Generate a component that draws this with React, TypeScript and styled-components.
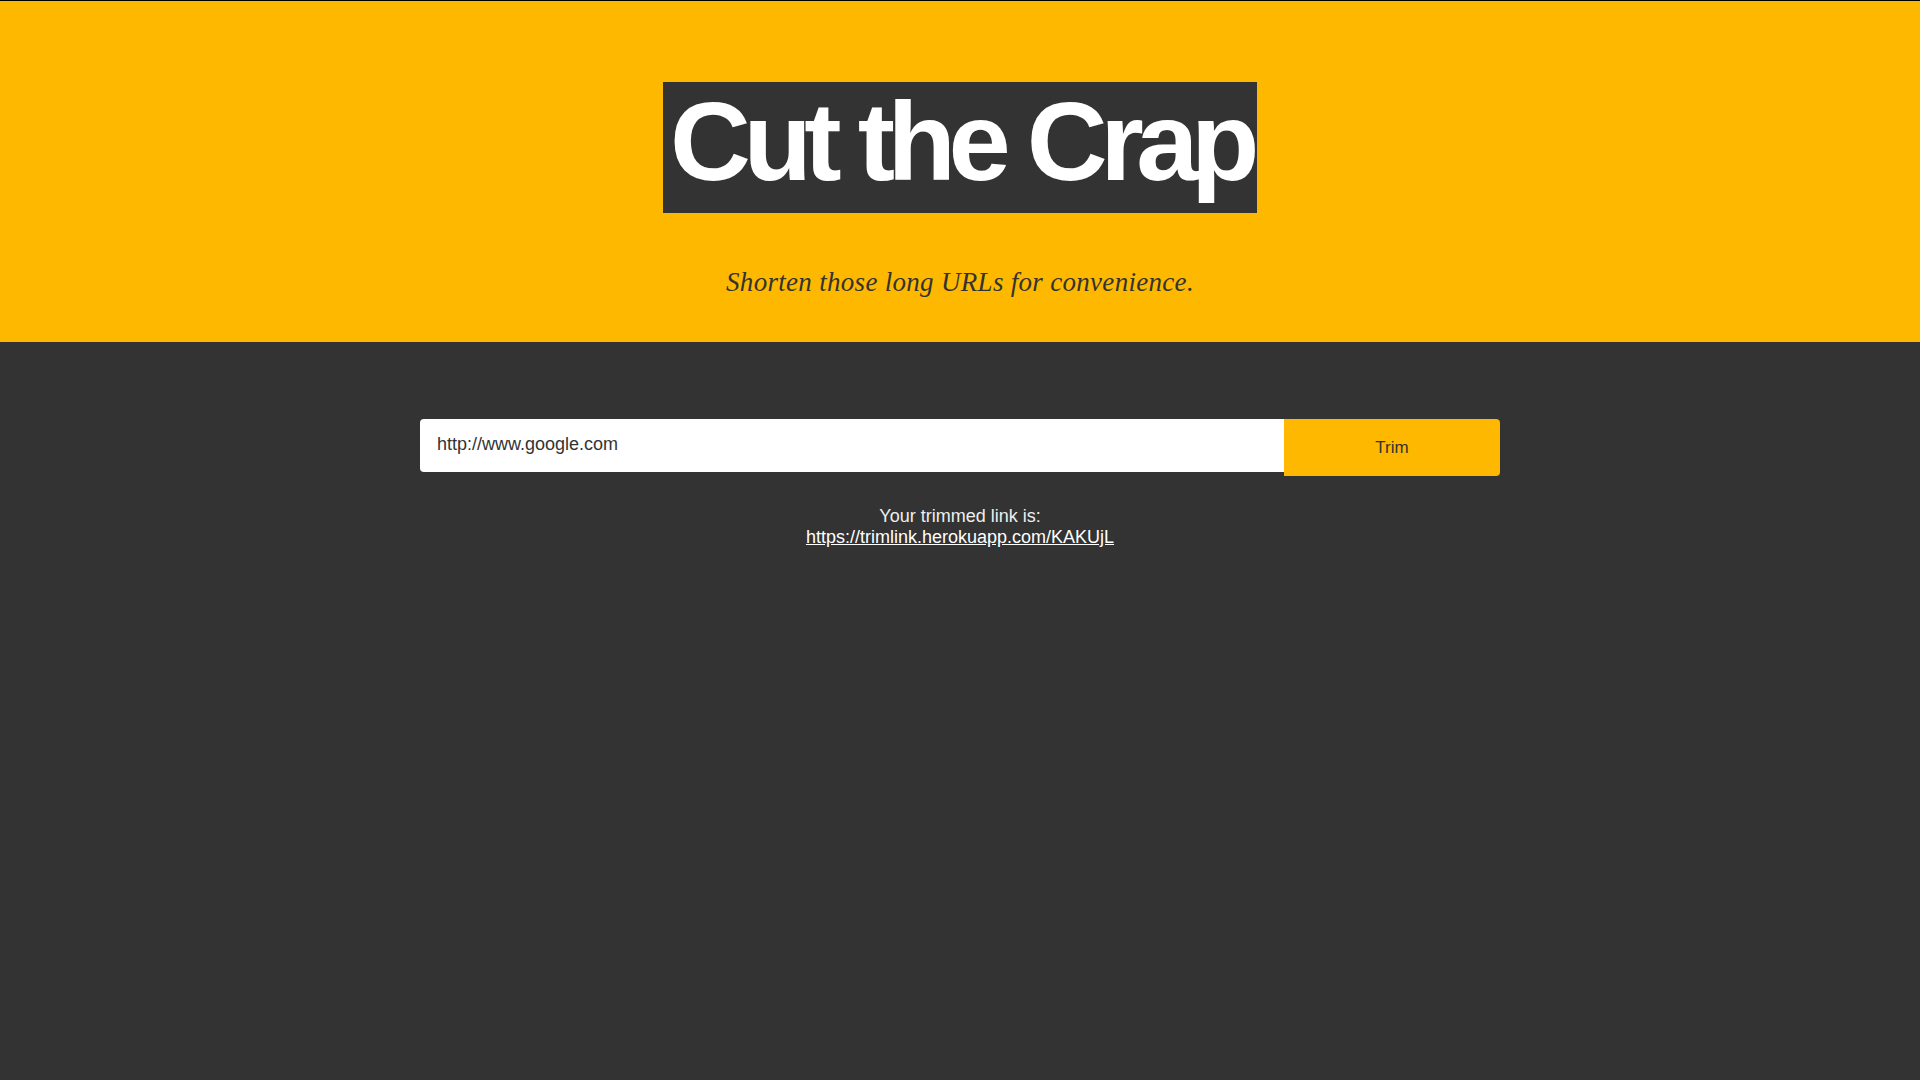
import React from "react";
import styled, { createGlobalStyle } from "styled-components";

const GlobalStyle = createGlobalStyle`
  html, body {
    margin: 0;
    padding: 0;
    background: #333333;
    min-height: 100%;
  }
  body {
    font-family: "Liberation Sans", Arial, Helvetica, sans-serif;
  }
`;

const Page = styled.div`
  min-height: 100vh;
  background: #333333;
  display: flex;
  flex-direction: column;
`;

const Header = styled.header`
  background: #ffb800;
  border-top: 1px solid #000;
  padding: 81px 0 45px;
  display: flex;
  flex-direction: column;
  align-items: center;
`;

const Title = styled.h1`
  margin: 0;
  display: inline-block;
  background: #333333;
  color: #ffffff;
  font-family: "Liberation Sans", Helvetica, Arial, sans-serif;
  font-weight: 700;
  font-size: 112px;
  line-height: 112px;
  letter-spacing: -7.5px;
  padding: 4px 5px 15px 7px;
`;

const Subtitle = styled.p`
  margin: 54px 0 0;
  font-family: "Liberation Serif", "Times New Roman", serif;
  font-style: italic;
  font-size: 27px;
  line-height: 30px;
  letter-spacing: 0.3px;
  color: #333333;
`;

const Main = styled.main`
  display: flex;
  flex-direction: column;
  align-items: center;
  padding-top: 77px;
`;

const Form = styled.form`
  width: 1080px;
  display: flex;
  align-items: flex-start;
`;

const UrlInput = styled.input`
  box-sizing: border-box;
  width: 80%;
  height: 53px;
  border: none;
  outline: none;
  border-radius: 4px 0 0 4px;
  background: #ffffff;
  padding: 0 17px 2px;
  font-family: "Liberation Sans", Helvetica, Arial, sans-serif;
  font-size: 18px;
  color: #333333;
`;

const TrimButton = styled.button`
  box-sizing: border-box;
  width: 20%;
  height: 57px;
  border: none;
  border-radius: 0 4px 4px 0;
  background: #ffb800;
  color: #333333;
  font-family: "Liberation Sans", Helvetica, Arial, sans-serif;
  font-size: 17px;
  cursor: pointer;
  padding: 0;
`;

const Result = styled.div`
  margin-top: 30px;
  text-align: center;
  color: #eeeeee;
  font-family: "Liberation Sans", Helvetica, Arial, sans-serif;
  font-size: 18px;
  line-height: 21px;
`;

const ResultLink = styled.a`
  display: block;
  color: #ffffff;
  text-decoration: underline;
`;

export default function App() {
  return (
    <>
      <GlobalStyle />
      <Page>
        <Header>
          <Title>Cut the Crap</Title>
          <Subtitle>Shorten those long URLs for convenience.</Subtitle>
        </Header>
        <Main>
          <Form onSubmit={(e) => e.preventDefault()}>
            <UrlInput type="text" defaultValue="http://www.google.com" />
            <TrimButton type="submit">Trim</TrimButton>
          </Form>
          <Result>
            Your trimmed link is:
            <ResultLink href="#">https://trimlink.herokuapp.com/KAKUjL</ResultLink>
          </Result>
        </Main>
      </Page>
    </>
  );
}
